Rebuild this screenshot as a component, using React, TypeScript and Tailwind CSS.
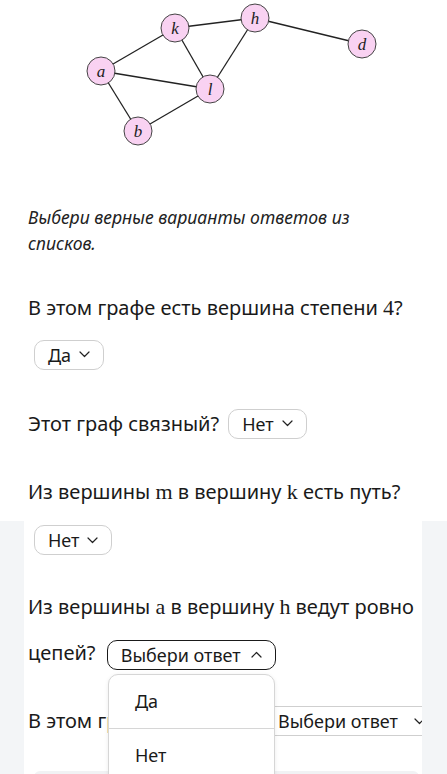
import React from "react";

const nodes: { id: string; x: number; y: number }[] = [
  { id: "k", x: 175, y: 28 },
  { id: "h", x: 255, y: 18 },
  { id: "d", x: 362, y: 44 },
  { id: "a", x: 101, y: 71 },
  { id: "l", x: 210, y: 89 },
  { id: "b", x: 138, y: 131 },
];

const edges: [string, string][] = [
  ["a", "k"],
  ["k", "h"],
  ["h", "d"],
  ["a", "l"],
  ["k", "l"],
  ["h", "l"],
  ["a", "b"],
  ["b", "l"],
];

function Graph() {
  const pos = (id: string) => nodes.find((n) => n.id === id)!;
  return (
    <svg width="447" height="165" viewBox="0 0 447 165" className="block">
      {edges.map(([p, q]) => {
        const a = pos(p);
        const b = pos(q);
        return <line key={p + q} x1={a.x} y1={a.y} x2={b.x} y2={b.y} stroke="#222" strokeWidth="1.3" />;
      })}
      {nodes.map((n) => (
        <g key={n.id}>
          <circle cx={n.x} cy={n.y} r="14" fill="#f9d2f2" stroke="#444" strokeWidth="1" />
          <text
            x={n.x}
            y={n.y + 5.5}
            textAnchor="middle"
            fontSize="17"
            fontStyle="italic"
            fontFamily="'Liberation Serif', serif"
            fill="#222"
          >
            {n.id}
          </text>
        </g>
      ))}
    </svg>
  );
}

function Chevron({ up = false }: { up?: boolean }) {
  return (
    <svg width="11" height="7" viewBox="0 0 11 7" fill="none" className="shrink-0">
      <path
        d={up ? "M1 6 L5.5 1.5 L10 6" : "M1 1 L5.5 5.5 L10 1"}
        stroke="#222"
        strokeWidth="1.2"
        strokeLinecap="round"
        strokeLinejoin="round"
      />
    </svg>
  );
}

function Select({ label, open = false, className = "" }: { label: string; open?: boolean; className?: string }) {
  return (
    <span
      className={
        "inline-flex h-[30px] items-center rounded-[10px] border bg-white pl-[13px] pr-[13px] align-middle text-[18px] leading-none text-[#1a1a1a] " +
        (open ? "gap-[10px] border-[#1a1a1a]" : "gap-2 border-[#cfcfcf]") +
        " " +
        className
      }
    >
      <span>{label}</span>
      <Chevron up={open} />
    </span>
  );
}

const M = ({ children }: { children: React.ReactNode }) => (
  <span className="text-[22px]" style={{ fontFamily: "'Liberation Serif', 'DejaVu Serif', serif" }}>
    {children}
  </span>
);

export default function App() {
  return (
    <div
      className="h-[774px] w-[447px] overflow-hidden bg-white text-[20px] text-[#1a1a1a]"
      style={{ fontFamily: "'Noto Sans', 'Open Sans', sans-serif" }}
    >
      <Graph />
      <div className="pl-7 pr-3">
        <p className="mt-[39px] text-[17.6px] italic leading-[26px] text-[#222]">
          Выбери верные варианты ответов из
          <br />
          списков.
        </p>
        <p className="mt-[37px] leading-[30px]">
          В этом графе есть вершина степени <M>4</M>?
        </p>
        <div className="mt-[15px] pl-[6px]">
          <Select label="Да" />
        </div>
        <div className="mt-[39px] flex h-[30px] items-center gap-[9px]">
          <span>Этот граф связный?</span>
          <Select label="Нет" />
        </div>
        <p className="mt-[38px] leading-[30px]">
          Из вершины <M>m</M> в вершину <M>k</M> есть путь?
        </p>
      </div>

      <div className="mt-[14px] flex bg-[#f3f5f7]">
        <div className="relative mx-[24px] w-[398px] overflow-hidden bg-white pl-1 pt-[3px]">
          <div className="pl-[6px]">
            <Select label="Нет" />
          </div>
          <p className="mt-[29px] leading-[46px]">
            Из вершины <M>a</M> в вершину <M>h</M> ведут ровно
            <br />
            цепей? <Select label="Выбери ответ" open className="ml-[6px]" />
          </p>
          <div className="mt-[30px] flex h-[30px] items-center whitespace-nowrap">
            <span className="w-[236px] shrink-0 overflow-hidden">В этом графе есть вершин</span>
            <Select label="Выбери ответ" className="shrink-0 gap-[16px]" />
          </div>
          <div className="ml-[6px] mt-[35px] h-[20px] w-[385px] rounded-t-md bg-[#f1f2f4]" />

          <div className="absolute left-[84px] top-[153px] z-10 w-[167px] rounded-t-[10px] border border-[#d6d6d6] bg-white text-[18px] shadow-[0_1px_4px_rgba(0,0,0,0.08)]">
            <div className="flex h-[54px] items-center border-b border-[#d6d6d6] pl-[26px]">Да</div>
            <div className="flex h-[54px] items-center pl-[26px]">Нет</div>
          </div>
        </div>
      </div>
    </div>
  );
}
